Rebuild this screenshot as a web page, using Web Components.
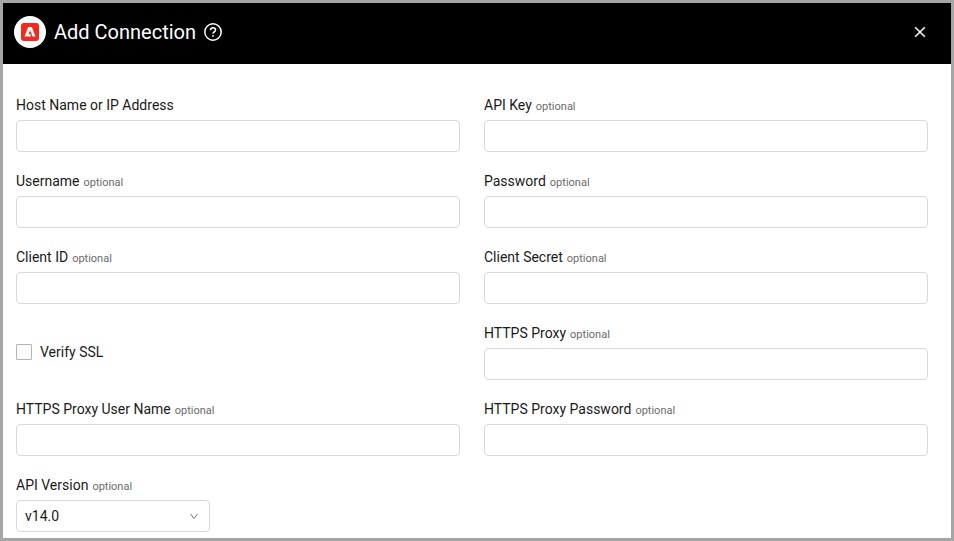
<!DOCTYPE html>
<html lang="en">
<head>
<meta charset="utf-8">
<meta name="viewport" content="width=device-width, initial-scale=1">
<title>Add Connection</title>
<style>
  body {
    margin: 0;
    font-family: Roboto, "Liberation Sans", sans-serif;
    font-size: 14px;
    line-height: 20px;
    color: #1a1a1a;
  }
</style>
</head>
<body>
<connection-dialog>
  <dialog-header slot="header">Add Connection</dialog-header>
  <text-field label="Host Name or IP Address" name="host"></text-field>
  <text-field label="API Key" name="apiKey" optional></text-field>
  <text-field label="Username" name="username" optional></text-field>
  <text-field label="Password" name="password" type="password" optional></text-field>
  <text-field label="Client ID" name="clientId" optional></text-field>
  <text-field label="Client Secret" name="clientSecret" type="password" optional></text-field>
  <check-field name="verifySsl">Verify SSL</check-field>
  <text-field label="HTTPS Proxy" name="proxy" optional></text-field>
  <text-field label="HTTPS Proxy User Name" name="proxyUser" optional></text-field>
  <text-field label="HTTPS Proxy Password" name="proxyPassword" type="password" optional></text-field>
  <select-field label="API Version" name="apiVersion" options="v14.0" optional></select-field>
</connection-dialog>

<script>
const fieldStyles = `
  :host { display: block; min-width: 0; }
  .label { display: flex; align-items: baseline; gap: 4px; margin-bottom: 5px; }
  .optional { font-size: 11px; line-height: 14px; color: #6b6b6b; }
  input, select {
    display: block; box-sizing: border-box; width: 100%; height: 32px;
    margin: 0; padding: 0 8px; border: 1px solid #d9d9d9; border-radius: 4px;
    background: #fff; color: inherit; font: inherit; outline: none;
  }
  input:focus, select:focus { border-color: #888; }
`;

class ConnectionDialog extends HTMLElement {
  constructor() {
    super();
    this.attachShadow({ mode: "open" });
    this.shadowRoot.innerHTML = `
      <style>
        :host {
          display: block; box-sizing: border-box; min-height: 100vh;
          border: 3px solid #a5a5a5; background: #fff;
        }
        form {
          display: grid; grid-template-columns: repeat(2, minmax(0, 1fr));
          gap: 19px 24px; padding: 31px 23px 6px 13px;
        }
      </style>
      <slot name="header"></slot>
      <form><slot></slot></form>
    `;
  }
}

class DialogHeader extends HTMLElement {
  constructor() {
    super();
    this.attachShadow({ mode: "open" });
    this.shadowRoot.innerHTML = `
      <style>
        :host {
          display: flex; align-items: center; gap: 8px; box-sizing: border-box;
          min-height: 61px; padding: 0 21px 3px 11px; background: #000; color: #fff;
        }
        h1 { margin: 0; font-size: 20px; line-height: 28px; font-weight: 400; }
        svg { display: block; }
        button {
          display: block; padding: 0; border: 0; background: none;
          color: inherit; cursor: pointer;
        }
        .close { margin-left: auto; }
      </style>
      <svg width="32" height="32" viewBox="0 0 32 32" aria-hidden="true">
        <circle cx="16" cy="16" r="16" fill="#fff"/>
        <rect x="7" y="7" width="18" height="18" rx="3" fill="#f5281e"/>
        <path d="M14.2 11h3.6l3.7 9.4h-3l-2.4-6.1-1.6 4h1.9l.8 2.1h-6.7z" fill="#fff"/>
      </svg>
      <h1><slot></slot></h1>
      <button type="button" aria-label="Help">
        <svg width="18" height="18" viewBox="0 0 18 18" fill="none" stroke="currentColor" stroke-width="1.5">
          <circle cx="9" cy="9" r="8.2"/>
          <path d="M6.5 7.2C6.5 5.7 7.6 4.8 9 4.8s2.5.9 2.5 2.2c0 1-.6 1.6-1.4 2C9.3 9.4 9 9.8 9 10.8"/>
          <circle cx="9" cy="12.9" r=".9" fill="currentColor" stroke="none"/>
        </svg>
      </button>
      <button class="close" type="button" aria-label="Close">
        <svg width="20" height="20" viewBox="0 0 20 20" fill="none" stroke="currentColor" stroke-width="1.5">
          <path d="M5.2 5.2l9.6 9.6M14.8 5.2l-9.6 9.6"/>
        </svg>
      </button>
    `;
  }
}

class TextField extends HTMLElement {
  constructor() {
    super();
    this.attachShadow({ mode: "open" });
  }

  connectedCallback() {
    const optional = this.hasAttribute("optional");
    this.shadowRoot.innerHTML = `
      <style>${fieldStyles}</style>
      <label class="label" for="control">
        <span>${this.getAttribute("label")}</span>
        ${optional ? `<span class="optional">optional</span>` : ""}
      </label>
      ${this.renderControl()}
    `;
  }

  renderControl() {
    const type = this.getAttribute("type") || "text";
    return `<input id="control" type="${type}" name="${this.getAttribute("name")}" autocomplete="off">`;
  }
}

class SelectField extends TextField {
  renderControl() {
    const options = this.getAttribute("options").split(",");
    return `
      <style>
        .select { position: relative; width: 194px; max-width: 100%; }
        select { appearance: none; padding-right: 28px; }
        .arrow { position: absolute; right: 11px; top: 11px; pointer-events: none; }
      </style>
      <div class="select">
        <select id="control" name="${this.getAttribute("name")}">
          ${options.map((option) => `<option>${option}</option>`).join("")}
        </select>
        <svg class="arrow" width="10" height="10" viewBox="0 0 10 10" fill="none" stroke="#777" aria-hidden="true">
          <path d="M1.5 3L5 7.5 8.5 3"/>
        </svg>
      </div>
    `;
  }
}

class CheckField extends HTMLElement {
  constructor() {
    super();
    this.attachShadow({ mode: "open" });
  }

  connectedCallback() {
    this.shadowRoot.innerHTML = `
      <style>
        :host { display: flex; align-items: center; }
        label { display: flex; align-items: center; gap: 8px; cursor: pointer; }
        input {
          appearance: none; box-sizing: border-box; width: 16px; height: 16px;
          margin: 0; border: 1px solid #b3b3b3; border-radius: 1px; background: #fff;
        }
        input:checked { background: #333; border-color: #333; }
      </style>
      <label>
        <input type="checkbox" name="${this.getAttribute("name")}">
        <slot></slot>
      </label>
    `;
  }
}

customElements.define("connection-dialog", ConnectionDialog);
customElements.define("dialog-header", DialogHeader);
customElements.define("text-field", TextField);
customElements.define("select-field", SelectField);
customElements.define("check-field", CheckField);
</script>
</body>
</html>
